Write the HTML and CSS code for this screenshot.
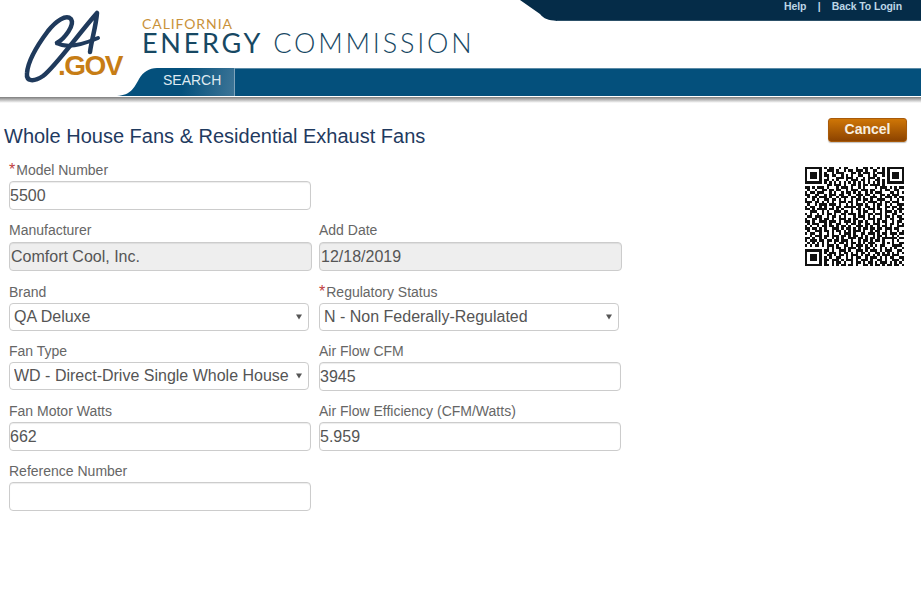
FILE: index.html
```html
<!DOCTYPE html>
<html lang="en">
<head>
    <meta charset="UTF-8">
    <title>Whole House Fans &amp; Residential Exhaust Fans</title>
    <link rel="stylesheet" href="styles.css">
</head>
<body>
    <header class="header">
        <svg class="logo" width="130" height="90" viewBox="0 0 130 90">
            <path class="logo-ca" d="M57 43C65 38 75 25 71 19C66 14 56 21 48 31C39 43 28 60 27 73C26 82 34 82 43 76C55 67 76 37 97 13C96 26 92 38 90 52"/>
            <path class="logo-ca thin" d="M57 43C67 49 84 44 98 38"/>
            <text class="logo-gov" x="58" y="75">.GOV</text>
        </svg>

        <div class="topbar">
            <svg class="topbar-curve" width="37" height="21" viewBox="0 0 37 21">
                <path d="M0 0H37V21C28 20 24 19 20 14L0 0Z" fill="#052c48"/>
            </svg>
            <div class="topbar-links">
                <a href="#">Help</a>
                <span class="sep">|</span>
                <a href="#">Back To Login</a>
            </div>
        </div>

        <div class="brand">
            <div class="brand-small">CALIFORNIA</div>
            <div class="brand-big"><b>ENERGY</b> COMMISSION</div>
        </div>

        <nav class="nav">
            <svg class="nav-curve" width="40" height="28" viewBox="0 0 40 28">
                <path d="M0 28C14 27 17 20 22 11C26 4 32 0 40 0V28Z" fill="#04507c"/>
            </svg>
            <a class="nav-tab" href="#">SEARCH</a>
            <div class="nav-rest"></div>
        </nav>
        <div class="header-shadow"></div>
    </header>

    <main class="content">
        <div class="left">
            <h1>Whole House Fans &amp; Residential Exhaust Fans</h1>

            <form class="form">
                <div class="field">
                    <label><span class="req">*</span>Model Number</label>
                    <input type="text" value="5500">
                </div>
                <div></div>

                <div class="field">
                    <label>Manufacturer</label>
                    <input class="readonly" type="text" value="Comfort Cool, Inc." readonly>
                </div>
                <div class="field">
                    <label>Add Date</label>
                    <input class="readonly" type="text" value="12/18/2019" readonly>
                </div>

                <div class="field">
                    <label>Brand</label>
                    <select><option>QA Deluxe</option></select>
                </div>
                <div class="field">
                    <label><span class="req">*</span>Regulatory Status</label>
                    <select><option>N - Non Federally-Regulated</option></select>
                </div>

                <div class="field">
                    <label>Fan Type</label>
                    <select><option>WD - Direct-Drive Single Whole House</option></select>
                </div>
                <div class="field">
                    <label>Air Flow CFM</label>
                    <input type="text" value="3945">
                </div>

                <div class="field">
                    <label>Fan Motor Watts</label>
                    <input type="text" value="662">
                </div>
                <div class="field">
                    <label>Air Flow Efficiency (CFM/Watts)</label>
                    <input type="text" value="5.959">
                </div>

                <div class="field">
                    <label>Reference Number</label>
                    <input type="text" value="">
                </div>
            </form>
        </div>

        <aside class="side">
            <button class="cancel" type="button">Cancel</button>
            <svg class="qr" id="qr" width="99" height="99" viewBox="0 0 41 41" shape-rendering="crispEdges"></svg>
        </aside>
    </main>

    <script src="qr.js"></script>
</body>
</html>
```

FILE: styles.css
```css
body {
    margin: 0;
    font-family: "Liberation Sans", Arial, sans-serif;
    background-color: #fff;
    color: #555;
}

.header {
    position: relative;
    height: 103px;
}

.logo {
    position: absolute;
    top: 0;
    left: 0;
}

.logo-ca {
    fill: none;
    stroke: #1f3a5c;
    stroke-width: 4.5;
    stroke-linecap: round;
    stroke-linejoin: round;
}

.logo-ca.thin {
    stroke-width: 4;
}

.logo-gov {
    font-family: "Liberation Sans", Arial, sans-serif;
    font-weight: bold;
    font-size: 28px;
    letter-spacing: -1.5px;
    fill: #c77d15;
}

.topbar {
    display: flex;
    justify-content: flex-end;
    height: 21px;
}

.topbar-curve {
    display: block;
}

.topbar-links {
    width: 364px;
    box-sizing: border-box;
    padding: 0 19px 0 227px;
    display: flex;
    justify-content: space-between;
    background-color: #052c48;
    border-bottom: 1px solid #2c5068;
    font-size: 10.5px;
    font-weight: bold;
    letter-spacing: -0.1px;
    line-height: 13px;
    color: #bcd6e6;
}

.topbar-links a {
    color: #bcd6e6;
    text-decoration: none;
}

.brand {
    height: 51px;
    margin-top: -4px;
    padding-left: 142px;
    color: #174863;
    font-family: Lato, sans-serif;
}

.brand-small {
    font-size: 14px;
    line-height: 14px;
    letter-spacing: 0.9px;
    color: #c9923a;
}

.brand-big {
    font-size: 27px;
    line-height: 20px;
    margin-top: 2px;
    letter-spacing: 2.8px;
    font-weight: 300;
    white-space: nowrap;
}

.brand-big b {
    font-weight: 400;
    letter-spacing: 2.75px;
}

.nav {
    display: flex;
    height: 28px;
    padding-left: 117px;
}

.nav-curve {
    display: block;
    flex: none;
}

.nav-tab {
    width: 78px;
    box-sizing: border-box;
    padding-left: 6px;
    border-right: 1px solid #7fa3ba;
    background: linear-gradient(100deg, #04507c 35%, #3d7597 100%);
    color: #dfe9f0;
    font-size: 14px;
    line-height: 25px;
    text-decoration: none;
}

.nav-rest {
    flex: 1;
    background-color: #04507c;
    border-top: 1px solid #5b8aa6;
}

.header-shadow {
    height: 6px;
    margin-top: 1px;
    background: linear-gradient(#7d7d7d, #fff);
}

.content {
    display: flex;
    justify-content: space-between;
    padding-right: 14px;
}

h1 {
    margin: 22px 0 13px 4px;
    font-size: 20px;
    font-weight: normal;
    line-height: 22px;
    color: #1f3a5f;
}

.form {
    display: grid;
    grid-template-columns: 310px 303px;
    row-gap: 10px;
    margin-left: 9px;
}

.field {
    display: flex;
    flex-direction: column;
    align-items: flex-start;
}

label {
    font-size: 14px;
    line-height: 20px;
    margin-bottom: 1px;
    color: #666;
}

.req {
    margin-right: 1px;
    color: #c04040;
    font-size: 16px;
    line-height: 0;
}

input[type="text"], select {
    box-sizing: border-box;
    font-family: "Liberation Sans", Arial, sans-serif;
    font-size: 16px;
    color: #555;
    border: 1px solid #ccc;
    border-radius: 4px;
}

input[type="text"] {
    width: 302px;
    height: 29px;
    padding: 0;
    box-shadow: inset 0 1px 1px rgba(0, 0, 0, 0.075);
    outline: none;
}

input.readonly[type="text"] {
    width: 303px;
    margin: 1px 0;
    padding-left: 1px;
    background-color: #eee;
}

select {
    width: 300px;
    height: 28px;
    padding: 0 0 2px 4px;
    appearance: none;
    background: #fff url("data:image/svg+xml,%3Csvg xmlns='http://www.w3.org/2000/svg' width='6' height='6'%3E%3Cpath d='M0 0.5H6L3 5.5Z' fill='%23555'/%3E%3C/svg%3E") no-repeat right 6px center;
}

.side {
    display: flex;
    flex-direction: column;
    align-items: flex-end;
}

.cancel {
    width: 79px;
    height: 24px;
    margin-top: 15px;
    padding: 0 0 2px;
    border: 1px solid #a85a0a;
    border-radius: 3px;
    background: linear-gradient(#cf7606, #8c4300);
    box-shadow: 0 1px 1px rgba(0, 0, 0, 0.25);
    color: #f7efe0;
    font-family: "Liberation Sans", Arial, sans-serif;
    font-size: 14px;
    font-weight: bold;
}

.qr {
    display: block;
    margin: 25px 3px 0 0;
}
```

FILE: qr.js
```js
// rows of the code, # is a dark module
const rows = [
    "#######.#.##..#.##...#..##.#..#.#.#######",
    "#.....#..###.#..#.##.###.#..##..#.#.....#",
    "#.###.#.#..#.###...##.#.###.#.###.#.###.#",
    "#.###.#.##.##..#.#.#..##..#.##..#.#.###.#",
    "#.###.#..#...###.###.#..#.###.#...#.###.#",
    "#.....#.##.#.#...#.###.##.#..##.#.#.....#",
    "#######.#.#.#.#.#.#.#.#.#.#.#.#.#.#######",
    ".........##.###.#..##.#.##.####.#........",
    "##.#.###.#...#.###.#..#.#....#.###.#.#.##",
    ".#..#..##.##.##..#.###.###.##..#.##..##..",
    "#.##.###..#.#..#.##.#.#..#.#.###...##.#.#",
    "##..##..#.###.##..#..###.##.#..##.#.###..",
    ".#.##.###.#..#.###.##.#.#..###.#.###.#.##",
    "#..#.#..##.##.#.#..#.##.##.#..###..#..#.#",
    "###.##.#.#.#..###.##.#..#.####.#.##.###..",
    ".#..#.###.###.#..#.#.###.#..#.##.#.#..###",
    "#.##..#.#..#.##.#####.#..##.#.#..##.##.#.",
    "##.#.####.##.#.#...#.##.#.###.##.#..#.###",
    "..###..#.#..###.##.#..#.##..#..#.###.#.#.",
    "#.#..#.#.##.#..##.###.#.#.##.###.#..##..#",
    ".##.###..#.##.#.#...#.###.#.#..#.##.#.##.",
    "#..##.#.##.#..###.#.##..#.###.##.#.##..##",
    "##.#..###.###.#.###.#.##.#..#.#.##..#.##.",
    ".#.###..#.#..##..#.##.#..##.###..#.##.#.#",
    "#.#..#.##.##.#.##.#..###.#.#..#.##.#..###",
    "##.##.#.#..###.#.##.#.#.##.##.##.###.##..",
    ".#..###.##.#.##.#.#.###.#..#.##..#.#..#.#",
    "#.##..#..#.#..#.###.#..##.###.#.##.###.##",
    "..#.###.##.###.##.#.##.#.#..#.##.#..#.#..",
    "##.#..#.#..#.#.#..###.##.#.##.#.######.##",
    "#.###.##.##.##.###.#..#.##.#.##.#...#.#..",
    ".#.#.#.#.#..#.##.#.##.#.#.###...#.#.#..##",
    "#.#.##.#.###.#..##.#.###.#.#.#.##...####.",
    ".........#.#.##.#.###.#..##.#..#.#.#.#..#",
    "#######.##.#..###.#..###.#.###.#.###..##.",
    "#.....#.#.###.#.##.#.#.##.#..##.#.#.#.#.#",
    "#.###.#..##.#.##.#.###.#.##.#.#.###.###..",
    "#.###.#.#.#..##..#.#.##..#.###.#.#.##..##",
    "#.###.#.##.###.#.###.#.###.#..##.#..###.#",
    "#.....#.#..#.##.#..#.##.#.##.#.###.#.#.#.",
    "#######.##.#.#.##.##.#..##.#.##.#.##.##.#"
];

let d = "";
rows.forEach((row, y) => {
    for (let x = 0; x < row.length; x++) {
        if (row[x] === "#") d += "M" + x + " " + y + "h1v1h-1z";
    }
});

const path = document.createElementNS("http://www.w3.org/2000/svg", "path");
path.setAttribute("d", d);
path.setAttribute("fill", "#111");
document.getElementById("qr").appendChild(path);
```
